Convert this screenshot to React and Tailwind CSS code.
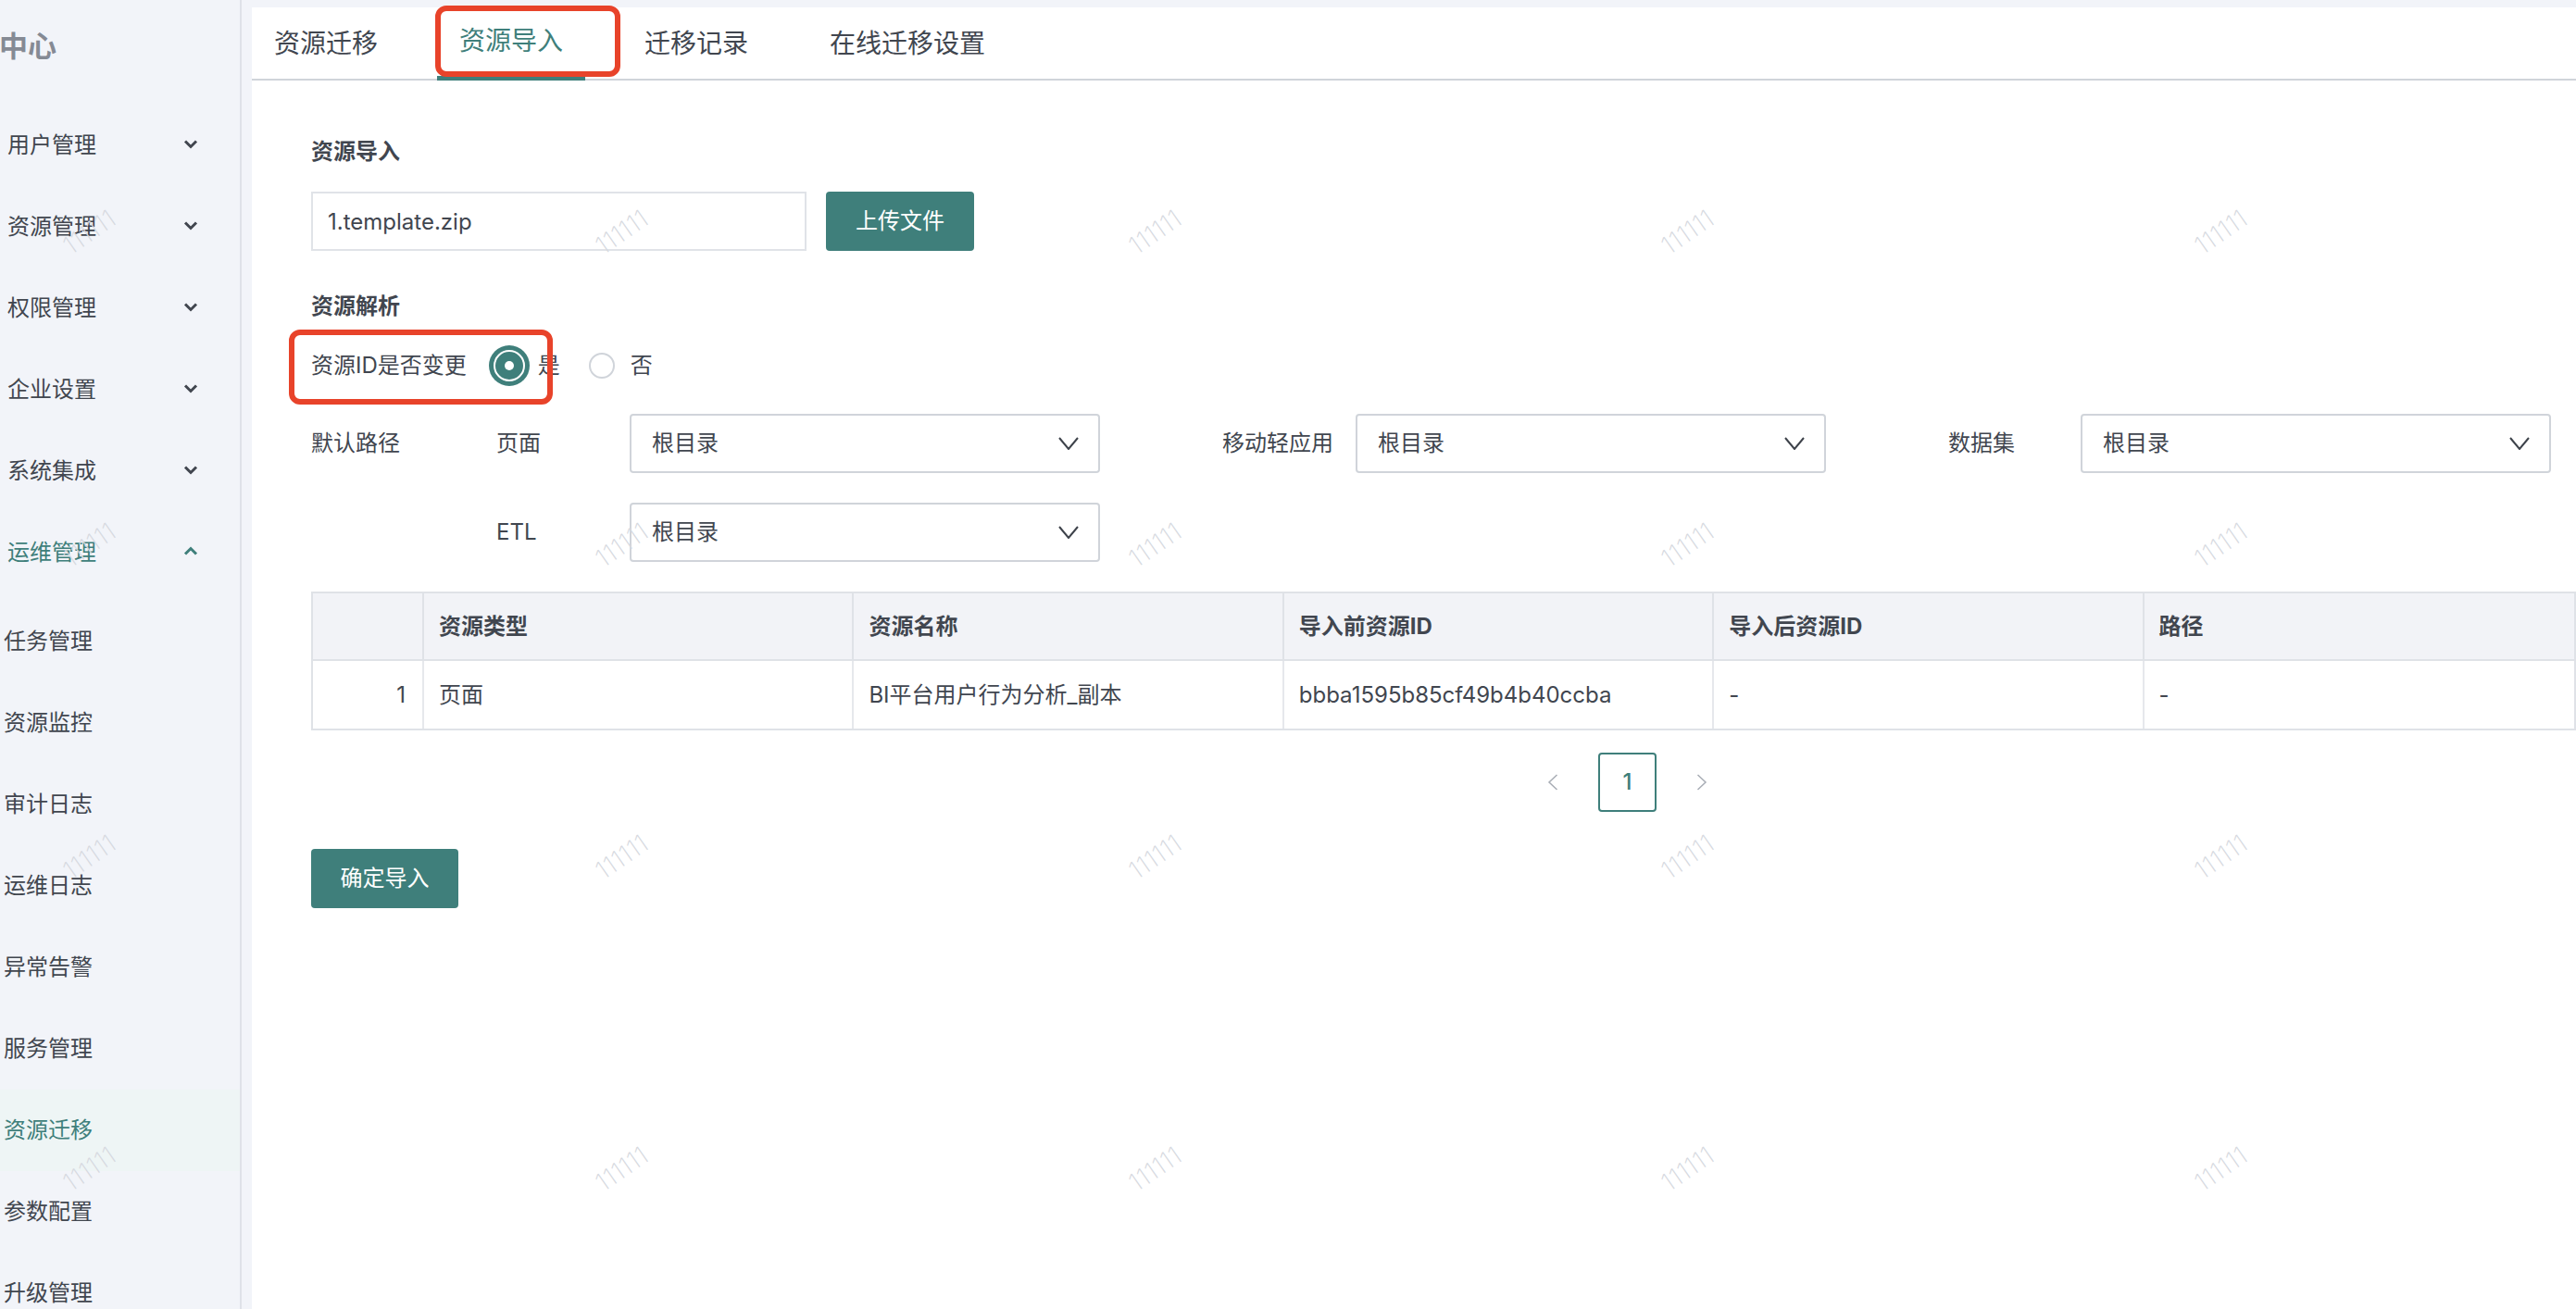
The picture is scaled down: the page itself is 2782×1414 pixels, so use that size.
const groups = ['用户管理', '资源管理', '权限管理', '企业设置', '系统集成'];
const subItems = ['任务管理', '资源监控', '审计日志', '运维日志', '异常告警', '服务管理', '资源迁移', '参数配置', '升级管理'];
const tabs = ['资源迁移', '资源导入', '迁移记录', '在线迁移设置'];
const columns = ['', '资源类型', '资源名称', '导入前资源ID', '导入后资源ID', '路径'];
const row = ['1', '页面', 'BI平台用户行为分析_副本', 'bbba1595b85cf49b4b40ccba', '-', '-'];
const watermarks = Array.from({ length: 20 }, (_, i) => i);

function SideChevron({ up }) {
  return (
    <svg width="16" height="11" viewBox="0 0 16 11" fill="none" className="mb-[3px] shrink-0">
      <path d={up ? 'M2 8.5L8 2.5L14 8.5' : 'M2 2.5L8 8.5L14 2.5'} stroke="currentColor" strokeWidth="3" />
    </svg>
  );
}

function SelectBox({ className = '' }) {
  return (
    <div className={`flex h-[64px] w-[508px] items-center justify-between rounded border-2 border-[#d0d4da] bg-white pl-[22px] pr-[21px] ${className}`}>
      <span>根目录</span>
      <svg width="22" height="14" viewBox="0 0 22 14" fill="none">
        <path d="M1 1L11 13L21 1" stroke="#3d424a" strokeWidth="2" />
      </svg>
    </div>
  );
}

export default function App() {
  return (
    <div className="relative flex h-[1414px] w-[2782px] overflow-hidden bg-[#f2f4f9] font-['Inter','Noto_Sans_CJK_SC',sans-serif] text-[24px] text-[#41464f]">
      <aside className="w-[261px] shrink-0 border-r-2 border-[#dfe2e8]">
        <div className="-ml-px flex h-[98px] items-center text-[31px] leading-none font-bold text-[#858a94]">中心</div>
        <div className="mt-[15px]">
          {groups.map((name) => (
            <div key={name} className="flex h-[88px] items-center pl-2 pr-[45px]">
              <span className="flex-1">{name}</span>
              <SideChevron />
            </div>
          ))}
          <div className="flex h-[88px] items-center pl-2 pr-[45px] text-[#3f7f7b]">
            <span className="flex-1">运维管理</span>
            <SideChevron up />
          </div>
        </div>
        <div className="mt-2">
          {subItems.map((name) => (
            <div key={name} className={`flex h-[88px] items-center pl-1 ${name === '资源迁移' ? 'bg-[#eef5f5] text-[#3f7f7b]' : ''}`}>
              {name}
            </div>
          ))}
        </div>
      </aside>

      <main className="mt-2 ml-[11px] flex-1 bg-white">
        <nav className="flex h-[79px] gap-10 border-b-2 border-[#d0d4da] text-[28px]">
          {tabs.map((tab) => (
            <div key={tab} className={`-mb-[2px] flex h-[79px] items-center px-6 pb-[2px] ${tab === '资源导入' ? 'border-b-[5px] border-[#3f7f7b] pb-0 text-[#3f7f7b]' : ''}`}>
              {tab}
            </div>
          ))}
        </nav>

        <div className="pt-[60px] pl-[64px]">
          <h2 className="h-8 pt-px leading-8 font-bold">资源导入</h2>
          <div className="mt-7 flex gap-[21px]">
            <div className="flex h-[64px] w-[535px] items-center border-2 border-[#e0e3e8] pt-px pl-4">1.template.zip</div>
            <button className="h-[64px] w-[160px] rounded bg-[#3f7f7b] text-white">上传文件</button>
          </div>

          <h2 className="mt-11 h-8 leading-8 font-bold">资源解析</h2>
          <div className="mt-4 flex h-[64px] items-center">
            <span>资源ID是否变更</span>
            <span className="ml-6 flex h-11 w-11 items-center justify-center rounded-full bg-[#3f7f7b]">
              <span className="flex h-[34px] w-[34px] items-center justify-center rounded-full border-2 border-white">
                <span className="h-2.5 w-2.5 rounded-full bg-white" />
              </span>
            </span>
            <span className="ml-[9px]">是</span>
            <span className="ml-[31px] h-7 w-7 rounded-full border-2 border-[#d0d4da]" />
            <span className="ml-[17px]">否</span>
          </div>

          <div className="mt-5 flex items-center">
            <span className="w-[200px]">默认路径</span>
            <span className="w-[144px]">页面</span>
            <SelectBox />
            <span className="ml-[132px] w-[144px]">移动轻应用</span>
            <SelectBox />
            <span className="ml-[132px] w-[143px]">数据集</span>
            <SelectBox />
          </div>
          <div className="mt-8 flex items-center pl-[200px]">
            <span className="w-[144px]">ETL</span>
            <SelectBox />
          </div>

          <div className="mt-8 w-[2446px] border-2 border-[#dfe2e7]">
            <div className="grid h-[73px] grid-cols-[120px_repeat(5,1fr)] border-b-2 border-[#dfe2e7] bg-[#f2f3f7] font-bold">
              {columns.map((col, i) => (
                <div key={i} className="flex items-center border-r-2 border-[#dfe2e7] pl-4 last:border-r-0">{col}</div>
              ))}
            </div>
            <div className="grid h-[73px] grid-cols-[120px_repeat(5,1fr)]">
              {row.map((cell, i) => (
                <div key={i} className={`flex items-center border-r-2 border-[#e6e8ec] pl-4 last:border-r-0 ${i === 0 ? 'justify-end pr-[18px]' : ''}`}>{cell}</div>
              ))}
            </div>
          </div>

          <div className="mt-6 ml-[1335px] flex items-center">
            <svg width="12" height="18" viewBox="0 0 12 18" fill="none">
              <path d="M10.5 1L2 9L10.5 17" stroke="#a8adb5" strokeWidth="1.5" />
            </svg>
            <span className="ml-[43px] flex h-[64px] w-[63px] items-center justify-center rounded border-2 border-[#3f7f7b] font-medium text-[#3f7f7b]">1</span>
            <svg width="12" height="18" viewBox="0 0 12 18" fill="none" className="ml-[43px]">
              <path d="M1.5 1L10 9L1.5 17" stroke="#a8adb5" strokeWidth="1.5" />
            </svg>
          </div>

          <button className="mt-10 h-[64px] w-[159px] rounded bg-[#3f7f7b] text-white">确定导入</button>
        </div>
      </main>

      {/* watermark layer */}
      <div className="pointer-events-none absolute top-[83px] left-[-191px] grid grid-cols-[repeat(5,575.5px)] auto-rows-[337.3px]">
        {watermarks.map((i) => (
          <div key={i} className="flex items-center justify-center">
            <span className="-rotate-[35deg] text-[27px] font-extralight text-[#d6d9e0]">111111</span>
          </div>
        ))}
      </div>

      {/* red annotation boxes */}
      <div className="pointer-events-none absolute top-[6px] left-[470px] h-[77px] w-[200px] rounded-[12px] border-[6px] border-[#e8432a]" />
      <div className="pointer-events-none absolute top-[356px] left-[312px] h-[81px] w-[285px] rounded-[12px] border-[6px] border-[#e8432a]" />
    </div>
  );
}
